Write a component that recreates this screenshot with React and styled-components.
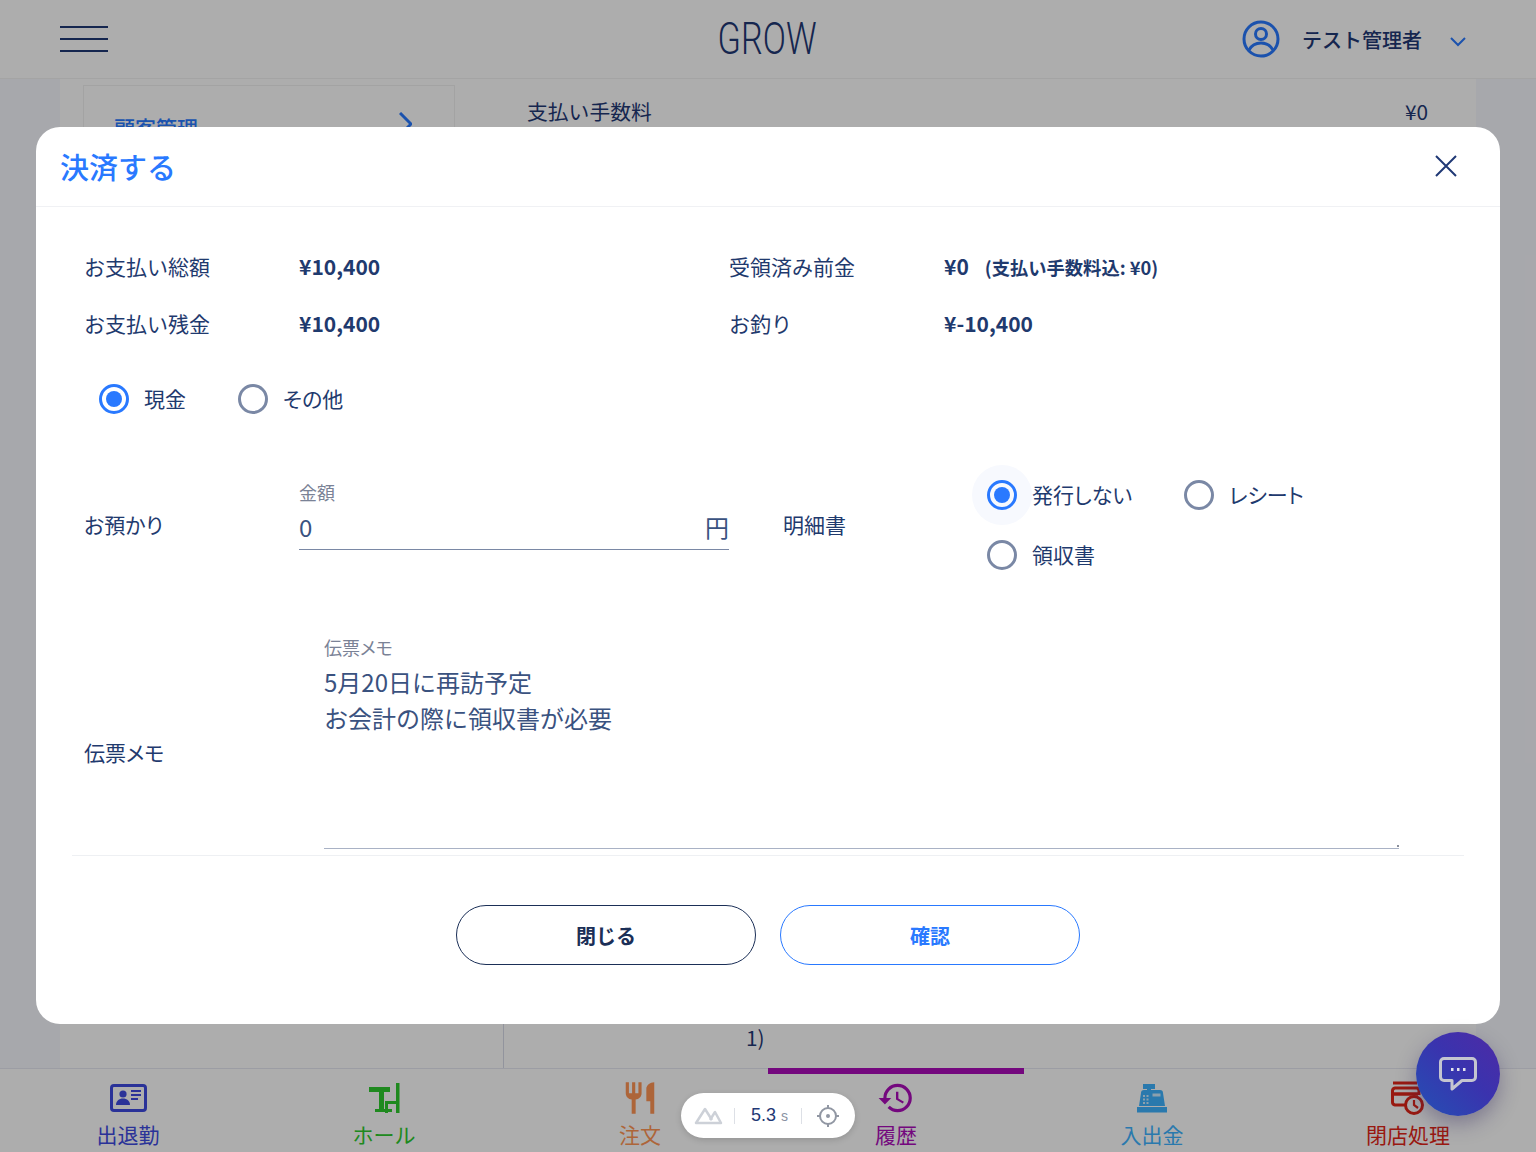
import React from "react";
import styled, { createGlobalStyle } from "styled-components";
import { MdHistory, MdRestaurant } from "react-icons/md";

const navy = "#1f3a6e";
const primary = "#2979ff";
const sans = `"Noto Sans CJK JP", "Noto Sans", sans-serif`;

const GlobalStyle = createGlobalStyle`
  html, body {
    margin: 0;
    padding: 0;
    background: #f7f8fe;
    font-family: ${sans};
    color: ${navy};
  }
  * { box-sizing: border-box; }
`;

const Page = styled.div`
  position: relative;
  width: 1536px;
  height: 1152px;
  overflow: hidden;
  display: flex;
  flex-direction: column;
`;

const Header = styled.header`
  height: 79px;
  flex: none;
  background: #fff;
  border-bottom: 1px solid #f2f2f2;
  display: grid;
  grid-template-columns: 1fr auto 1fr;
  align-items: center;
  padding: 0 60px;
`;

const Burger = styled.div`
  width: 48px;
  display: flex;
  flex-direction: column;
  gap: 10px;
  & > span {
    height: 2px;
    background: #1f3875;
  }
`;

const Logo = styled.div`
  font-family: Roboto, sans-serif;
  font-weight: 300;
  font-size: 45px;
  line-height: 78px;
  color: #1f3875;
  transform: scaleX(0.76);
  margin-left: -1px;
`;

const UserBox = styled.div`
  display: flex;
  align-items: center;
  justify-content: flex-end;
  margin-right: 10px;
`;

const UserName = styled.span`
  margin-left: 22px;
  margin-right: 28px;
  font-size: 20px;
  font-weight: 500;
  color: #1f3875;
`;

const Chevron = styled.svg`
  margin-top: 6px;
`;

const Content = styled.div`
  flex: 1;
  min-height: 0;
  margin: 0 60px;
  background: #fff;
  display: flex;
`;

const Sidebar = styled.aside`
  width: 443px;
  flex: none;
  padding: 6px 48px 0 23px;
`;

const SideCard = styled.div`
  border: 1px solid #f0f0f0;
  height: 140px;
  padding: 26px 42px 0 30px;
  display: flex;
  justify-content: space-between;
  align-items: flex-start;
  color: ${primary};
  font-size: 21px;
  font-weight: 500;
`;

const Main = styled.main`
  flex: 1;
  display: flex;
  flex-direction: column;
  justify-content: space-between;
  padding-top: 17px;
  font-size: 20.8px;
  color: #1f3875;
`;

const FeeRow = styled.div`
  display: flex;
  justify-content: space-between;
  padding: 0 48px 0 24px;
`;

const Footnote = styled.div`
  height: 60px;
  border-left: 1px solid #d8dbe8;
  padding: 14px 0 0 242px;
  line-height: 30px;
`;

const BottomNav = styled.nav`
  height: 84px;
  flex: none;
  background: #fff;
  border-top: 1px solid #e6e8f2;
  display: grid;
  grid-template-columns: repeat(6, 256px);
`;

const NavItem = styled.div`
  position: relative;
  display: flex;
  flex-direction: column;
  align-items: center;
  padding-top: 11px;
  color: ${(p) => p.$color};
  font-size: 21px;
  line-height: 30px;
  &::before {
    content: "";
    display: ${(p) => (p.$active ? "block" : "none")};
    position: absolute;
    top: -1px;
    left: 0;
    right: 0;
    height: 6px;
    background: ${(p) => p.$color};
  }
`;

const NavIcon = styled.div`
  height: 36px;
  margin-bottom: 3px;
  display: flex;
  align-items: center;
  justify-content: center;
`;

const Overlay = styled.div`
  position: absolute;
  inset: 0;
  background: rgba(0, 0, 0, 0.32);
  display: flex;
  justify-content: center;
  padding-top: 127px;
`;

const Modal = styled.section`
  width: 1464px;
  height: 897px;
  background: #fff;
  border-radius: 24px;
  display: flex;
  flex-direction: column;
  color: ${navy};
`;

const ModalHead = styled.div`
  height: 80px;
  flex: none;
  border-bottom: 1px solid #f0f1f4;
  display: flex;
  align-items: center;
  justify-content: space-between;
  padding: 0 43px 2px 25px;
`;

const Title = styled.h2`
  margin: 0;
  font-size: 29px;
  font-weight: 500;
  margin-left: -1px;
  color: ${primary};
`;

const ModalBody = styled.div`
  padding: 30px 36px 0;
`;

const InfoRow = styled.div`
  height: 57px;
  padding: 0 12px;
  display: grid;
  grid-template-columns: 215px 430px 215px 1fr;
  align-items: center;
  font-size: 21px;
`;

const Value = styled.span`
  font-weight: 700;
`;

const Note = styled.span`
  font-size: 18.3px;
  font-weight: 700;
  margin-left: 16px;
`;

const RadioLine = styled.div`
  display: flex;
  gap: 37px;
  margin: 18px 0 0 12px;
`;

const RadioItem = styled.label`
  display: flex;
  align-items: center;
  height: 60px;
  font-size: 21px;
  font-feature-settings: "palt";
`;

const RadioText = styled.span`
  margin-top: -2px;
`;

const RadioCell = styled.span`
  width: 60px;
  height: 60px;
  flex: none;
  border-radius: 50%;
  display: flex;
  align-items: center;
  justify-content: center;
  background: ${(p) => (p.$focus ? "#f7f9fe" : "transparent")};
`;

const RadioDot = styled.span`
  width: 30px;
  height: 30px;
  border-radius: 50%;
  border: 3px solid ${(p) => (p.$on ? primary : "#7a88a5")};
  display: flex;
  align-items: center;
  justify-content: center;
  &::after {
    content: "";
    width: 16px;
    height: 16px;
    border-radius: 50%;
    background: ${(p) => (p.$on ? primary : "transparent")};
  }
`;

const InputRow = styled.div`
  margin-top: 36px;
  padding-left: 12px;
  display: grid;
  grid-template-columns: 215px 430px 54px 189px 1fr;
  align-items: center;
  font-size: 21px;
  font-feature-settings: "palt";
`;

const RowLabel = styled.span`
  grid-column: ${(p) => p.$column};
  margin-top: -2px;
`;

const AmountField = styled.div`
  grid-column: 2;
  height: 70px;
  border-bottom: 1px solid #7a88a5;
  align-self: start;
  margin-top: 15px;
`;

const FieldLabel = styled.div`
  font-size: 18px;
  line-height: 26px;
  margin-top: -1px;
  color: #7a8296;
`;

const AmountLine = styled.div`
  display: flex;
  justify-content: space-between;
  font-size: 24px;
  line-height: 36px;
  margin-top: 4px;
  color: #3a527f;
`;

const ReceiptGroup = styled.div`
  display: grid;
  grid-template-columns: 197px 1fr;
`;

const MemoRow = styled.div`
  margin-top: 50px;
  padding-left: 12px;
  height: 220px;
  display: grid;
  grid-template-columns: 240px 1075px;
  font-size: 21px;
  font-feature-settings: "palt";
`;

const MemoLabel = styled.div`
  align-self: center;
  padding-top: 14px;
`;

const MemoField = styled.div`
  position: relative;
  height: 214px;
  border-bottom: 1px solid #a9b2c5;
`;

const MemoText = styled.div`
  font-size: 24px;
  line-height: 36px;
  margin-top: 4px;
  color: #3a527f;
  font-feature-settings: normal;
`;

const Grip = styled.span`
  position: absolute;
  right: 0;
  bottom: 1px;
  width: 2px;
  height: 2px;
  background: #8a8f9c;
`;

const Footer = styled.div`
  margin: 0 36px;
  border-top: 1px solid #eef0f3;
  padding-top: 49px;
  display: flex;
  justify-content: center;
  gap: 24px;
`;

const Button = styled.button`
  width: 300px;
  height: 60px;
  border-radius: 30px;
  background: #fff;
  border: 1.5px solid ${(p) => (p.$primary ? primary : "#1b2f57")};
  color: ${(p) => (p.$primary ? primary : "#1b2f57")};
  font-family: ${sans};
  font-size: 20px;
  font-weight: 700;
`;

const DevPill = styled.div`
  position: absolute;
  left: 681px;
  top: 1093px;
  width: 174px;
  height: 45px;
  background: #fff;
  border-radius: 23px;
  box-shadow: 0 2px 6px rgba(0, 0, 0, 0.15);
  display: flex;
  align-items: center;
  padding-left: 13px;
  font-family: "Liberation Sans", sans-serif;
  font-size: 18px;
  color: #1f3875;
`;

const DevSep = styled.span`
  width: 1px;
  height: 16px;
  background: #dde0e6;
  margin: ${(p) => p.$margin};
`;

const DevUnit = styled.span`
  font-size: 14px;
  color: #8a92a3;
  margin-left: 5px;
`;

const ChatFab = styled.div`
  position: absolute;
  right: 36px;
  bottom: 36px;
  width: 84px;
  height: 84px;
  border-radius: 50%;
  background: linear-gradient(45deg, #2450b4 0%, #3a33ae 55%, #4e2aa5 100%);
  box-shadow: 0 8px 20px rgba(40, 30, 90, 0.35);
  display: flex;
  align-items: center;
  justify-content: center;
`;

const IdCardIcon = () => (
  <svg width="37" height="28" viewBox="0 0 37 28" fill="none">
    <rect x="1.500" y="1.500" width="34" height="25" rx="2.500" stroke="currentColor" strokeWidth="3" />
    <circle cx="13" cy="10" r="3.600" fill="currentColor" />
    <path d="M6 21c0-4 3-6.500 7-6.500s7 2.500 7 6.500z" fill="currentColor" />
    <path d="M21 7h10M21 11h10M21 15h7" stroke="currentColor" strokeWidth="1.800" />
  </svg>
);

const TableIcon = () => (
  <svg width="31" height="30" viewBox="0 0 31 30" fill="currentColor">
    <rect x="0" y="4" width="21" height="5" />
    <rect x="10" y="8" width="5" height="19" />
    <rect x="6" y="26" width="17" height="3" />
    <rect x="27" y="0" width="3.500" height="30" />
    <rect x="16" y="18" width="11" height="3" />
    <rect x="16" y="18" width="3" height="12" />
  </svg>
);

const RegisterIcon = () => (
  <svg width="30" height="29" viewBox="0 0 30 29" fill="currentColor">
    <path d="M6 0h12v5h-4v2h-4V5H6z" />
    <path d="M4 9a3 3 0 0 1 3-3h16a3 3 0 0 1 3 3l2 13H2z" />
    <rect x="0" y="23" width="30" height="5.500" />
    <g fill="#fff" fillOpacity="0.75">
      <rect x="15.500" y="9.500" width="8" height="3" />
      <rect x="6" y="11" width="2" height="2" />
      <rect x="9.500" y="11" width="2" height="2" />
      <rect x="6" y="14.500" width="2" height="2" />
      <rect x="9.500" y="14.500" width="2" height="2" />
      <rect x="6" y="18" width="2" height="2" />
      <rect x="9.500" y="18" width="2" height="2" />
    </g>
  </svg>
);

const ClosingIcon = () => (
  <svg width="36" height="36" viewBox="0 0 36 36" fill="none" stroke="currentColor">
    <path d="M3 3h24" strokeWidth="3" />
    <path d="M18 25H5a3 3 0 0 1-2.500-3V11a3 3 0 0 1 2.500-3h22a3 3 0 0 1 2 3v4" strokeWidth="3" />
    <path d="M3 14h25" strokeWidth="3.500" />
    <circle cx="24" cy="25" r="8.500" fill="#fff" strokeWidth="3" />
    <path d="M24 20v5l4 3" strokeWidth="2.200" />
  </svg>
);

const UserIcon = () => (
  <svg width="38" height="38" viewBox="0 0 38 38" fill="none" stroke={primary} strokeWidth="3">
    <circle cx="19" cy="19" r="17" />
    <circle cx="19" cy="14" r="5.500" />
    <path d="M7 30c2.500-4.500 6.500-7 12-7s9.500 2.500 12 7" />
  </svg>
);

const NuxtIcon = () => (
  <svg width="29" height="19" viewBox="0 0 29 19" fill="none" stroke="#cdd1d8" strokeWidth="2.500" strokeLinejoin="round">
    <path d="M18 17H2l9-14 7 11" />
    <path d="M18 17h9L21 6l-5 8" />
  </svg>
);

const TargetIcon = () => (
  <svg width="24" height="24" viewBox="0 0 24 24" fill="none" stroke="#9197a3" strokeWidth="2">
    <circle cx="12" cy="12" r="8" />
    <circle cx="12" cy="12" r="2" fill="#9197a3" stroke="none" />
    <path d="M12 1v3M12 20v3M1 12h3M20 12h3" />
  </svg>
);

const ChatIcon = () => (
  <svg width="38" height="34" viewBox="0 0 38 34" fill="none" stroke="#c4c5d0" strokeWidth="3" strokeLinejoin="round">
    <path d="M5 1.500h28a3.500 3.500 0 0 1 3.500 3.500v15a3.500 3.500 0 0 1-3.500 3.500H23L13 32v-8.500H5A3.500 3.500 0 0 1 1.500 20V5A3.500 3.500 0 0 1 5 1.500z" />
    <path d="M12 12.500h2.500M18 12.500h2.500M24 12.500h2.500" stroke="#e4e4ec" />
  </svg>
);

const Radio = ({ on, focus, children }) => (
  <RadioItem>
    <RadioCell $focus={focus}>
      <RadioDot $on={on} />
    </RadioCell>
    <RadioText>{children}</RadioText>
  </RadioItem>
);

const navItems = [
  { label: "出退勤", color: "#3e4be1", icon: <IdCardIcon /> },
  { label: "ホール", color: "#2ecb2e", icon: <TableIcon /> },
  { label: "注文", color: "#ff9555", icon: <MdRestaurant size={38} /> },
  { label: "履歴", color: "#ac0cba", icon: <MdHistory size={38} />, active: true },
  { label: "入出金", color: "#3eb3ff", icon: <RegisterIcon /> },
  { label: "閉店処理", color: "#e22618", icon: <ClosingIcon /> },
];

export default function App() {
  return (
    <Page>
      <GlobalStyle />
      <Header>
        <Burger>
          <span />
          <span />
          <span />
        </Burger>
        <Logo>GROW</Logo>
        <UserBox>
          <UserIcon />
          <UserName>テスト管理者</UserName>
          <Chevron width="16" height="10" viewBox="0 0 16 10" fill="none" stroke={primary} strokeWidth="2">
            <path d="m1 1 7 7 7-7" />
          </Chevron>
        </UserBox>
      </Header>
      <Content>
        <Sidebar>
          <SideCard>
            顧客管理
            <svg width="13" height="24" viewBox="0 0 13 24" fill="none" stroke={primary} strokeWidth="3">
              <path d="m1 1 11 11L1 23" />
            </svg>
          </SideCard>
        </Sidebar>
        <Main>
          <FeeRow>
            <span>支払い手数料</span>
            <span>¥0</span>
          </FeeRow>
          <Footnote>1)</Footnote>
        </Main>
      </Content>
      <BottomNav>
        {navItems.map((item) => (
          <NavItem key={item.label} $color={item.color} $active={item.active}>
            <NavIcon>{item.icon}</NavIcon>
            {item.label}
          </NavItem>
        ))}
      </BottomNav>
      <Overlay>
        <Modal>
          <ModalHead>
            <Title>決済する</Title>
            <svg width="22" height="22" viewBox="0 0 22 22" fill="none" stroke="#1f3875" strokeWidth="2">
              <path d="m1 1 20 20M21 1 1 21" />
            </svg>
          </ModalHead>
          <ModalBody>
            <InfoRow>
              <span>お支払い総額</span>
              <Value>¥10,400</Value>
              <span>受領済み前金</span>
              <span>
                <Value>¥0</Value>
                <Note>(支払い手数料込: ¥0)</Note>
              </span>
            </InfoRow>
            <InfoRow>
              <span>お支払い残金</span>
              <Value>¥10,400</Value>
              <span>お釣り</span>
              <Value>¥-10,400</Value>
            </InfoRow>
            <RadioLine>
              <Radio on>現金</Radio>
              <Radio>その他</Radio>
            </RadioLine>
            <InputRow>
              <RowLabel $column={1}>お預かり</RowLabel>
              <AmountField>
                <FieldLabel>金額</FieldLabel>
                <AmountLine>
                  <span>0</span>
                  <span>円</span>
                </AmountLine>
              </AmountField>
              <RowLabel $column={4}>明細書</RowLabel>
              <ReceiptGroup>
                <Radio on focus>発行しない</Radio>
                <Radio>レシート</Radio>
                <Radio>領収書</Radio>
              </ReceiptGroup>
            </InputRow>
            <MemoRow>
              <MemoLabel>伝票メモ</MemoLabel>
              <MemoField>
                <FieldLabel>伝票メモ</FieldLabel>
                <MemoText>
                  5月20日に再訪予定
                  <br />
                  お会計の際に領収書が必要
                </MemoText>
                <Grip />
              </MemoField>
            </MemoRow>
          </ModalBody>
          <Footer>
            <Button>閉じる</Button>
            <Button $primary>確認</Button>
          </Footer>
        </Modal>
      </Overlay>
      <DevPill>
        <NuxtIcon />
        <DevSep $margin="0 16px 0 11px" />
        5.3
        <DevUnit>s</DevUnit>
        <DevSep $margin="0 14px 0 13px" />
        <TargetIcon />
      </DevPill>
      <ChatFab>
        <ChatIcon />
      </ChatFab>
    </Page>
  );
}
